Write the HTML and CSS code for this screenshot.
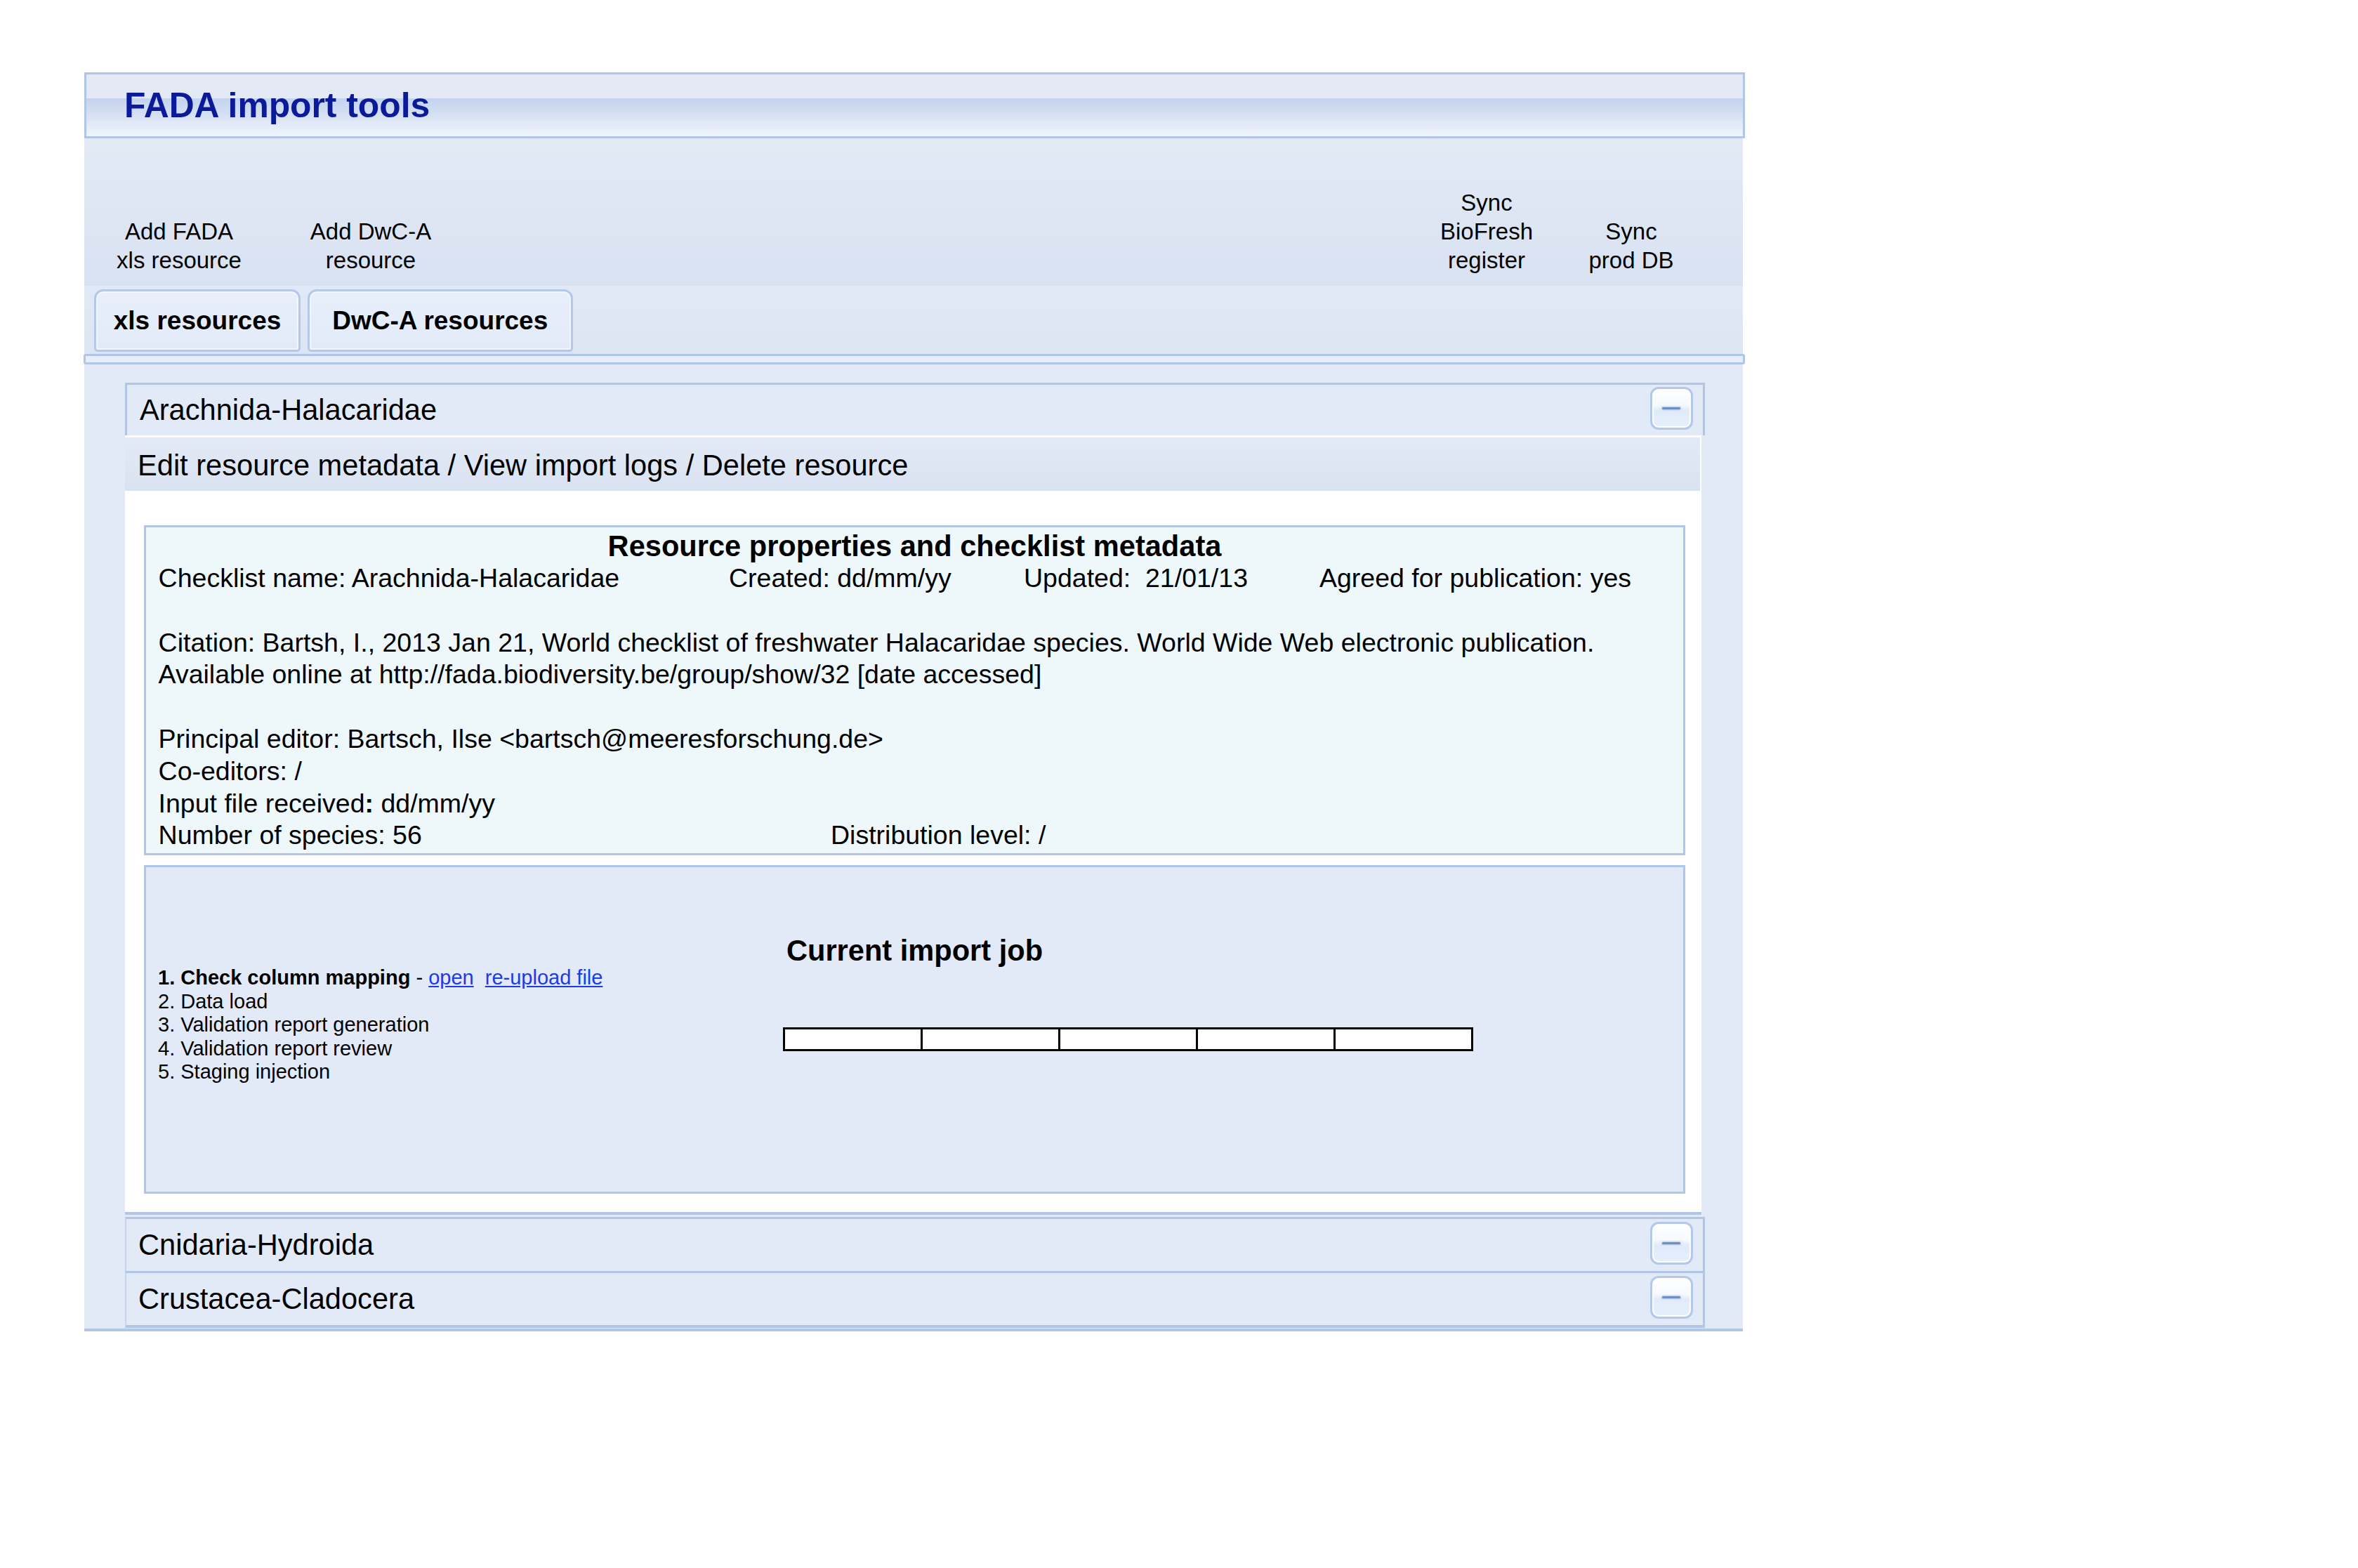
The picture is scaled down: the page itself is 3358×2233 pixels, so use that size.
FILE: index.html
```html
<!DOCTYPE html>
<html lang="en">
<head>
<meta charset="utf-8">
<title>FADA import tools</title>
<link rel="stylesheet" href="styles.css">
</head>
<body>
<div class="app">
  <header class="titlebar"><h1>FADA import tools</h1></header>

  <nav class="toolbar">
    <div class="tool tool-a">Add FADA<br>xls resource</div>
    <div class="tool tool-b">Add DwC-A<br>resource</div>
    <div class="tool tool-c">Sync<br>BioFresh<br>register</div>
    <div class="tool tool-d">Sync<br>prod DB</div>
  </nav>

  <div class="tabs">
    <div class="tab tab-xls">xls resources</div>
    <div class="tab tab-dwc">DwC-A resources</div>
  </div>
  <div class="tabline"></div>

  <main class="content">
    <section class="panel open">
      <div class="panel-head">
        <span class="panel-title">Arachnida-Halacaridae</span>
        <span class="collapse"></span>
      </div>
      <div class="panel-body">
        <div class="actions">Edit resource metadata / View import logs / Delete resource</div>

        <div class="meta">
          <div class="meta-title">Resource properties and checklist metadata</div>
          <div class="meta-row"><span class="c1">Checklist name: Arachnida-Halacaridae</span><span class="c2">Created: dd/mm/yy</span><span class="c3">Updated:  21/01/13</span><span>Agreed for publication: yes</span></div>
          <div class="meta-row"> </div>
          <div class="meta-row">Citation: Bartsh, I., 2013 Jan 21, World checklist of freshwater Halacaridae species. World Wide Web electronic publication.</div>
          <div class="meta-row">Available online at http://fada.biodiversity.be/group/show/32 [date accessed]</div>
          <div class="meta-row"> </div>
          <div class="meta-row">Principal editor: Bartsch, Ilse &lt;bartsch@meeresforschung.de&gt;</div>
          <div class="meta-row">Co-editors: /</div>
          <div class="meta-row">Input file received<b>:</b> dd/mm/yy</div>
          <div class="meta-row"><span class="n1">Number of species: 56</span><span>Distribution level: /</span></div>
        </div>

        <div class="job">
          <div class="job-title">Current import job</div>
          <div class="job-row">
            <ol class="steps">
              <li><b>1. Check column mapping</b> - <a href="#">open</a>&nbsp;&nbsp;<a href="#">re-upload file</a></li>
              <li>2. Data load</li>
              <li>3. Validation report generation</li>
              <li>4. Validation report review</li>
              <li>5. Staging injection</li>
            </ol>
            <div class="bar"><span></span><span></span><span></span><span></span><span></span></div>
          </div>
        </div>
      </div>
    </section>

    <section class="panel closed">
      <div class="panel-head">
        <span class="panel-title">Cnidaria-Hydroida</span>
        <span class="collapse"></span>
      </div>
    </section>
    <section class="panel closed last">
      <div class="panel-head">
        <span class="panel-title">Crustacea-Cladocera</span>
        <span class="collapse"></span>
      </div>
    </section>
  </main>
</div>
</body>
</html>
```

FILE: styles.css
```css
body {
  margin: 0;
  background: #ffffff;
  font-family: "Liberation Sans", Arial, Helvetica, sans-serif;
  color: #000;
}

.app {
  margin: 103px 0 0 120px;
  width: 2365px;
}

/* ---------- title bar ---------- */
.titlebar {
  height: 94px;
  box-sizing: border-box;
  border: 3px solid #b0c6e8;
  padding-left: 54px;
  background: linear-gradient(to bottom,
    #e3eaf6 0%, #e3eaf6 38.5%,
    #c4d4ee 39%, #d3def2 62%, #e6edf8 85%, #f0f4fb 100%);
}
.titlebar h1 {
  margin: 0;
  font-size: 49.8px;
  font-weight: bold;
  line-height: 88px;
  color: #0b1a98;
}

/* ---------- toolbar ---------- */
.toolbar {
  width: 2362px;
  height: 210px;
  box-sizing: border-box;
  display: flex;
  align-items: flex-end;
  padding: 0 59px 16px 25px;
  background: linear-gradient(to bottom, #e3eaf6, #d9e2f1);
}
.tool {
  font-size: 33px;
  line-height: 41px;
  text-align: center;
}
.tool-a { width: 220px; }
.tool-b { width: 220px; margin-left: 53px; }
.tool-c { width: 200px; margin-left: auto; }
.tool-d { width: 200px; margin-left: 6px; }

/* ---------- tabs ---------- */
.tabs {
  width: 2362px;
  height: 97px;
  box-sizing: border-box;
  display: flex;
  gap: 9.5px;
  padding: 5px 0 0 14px;
  background: linear-gradient(to bottom, #e2e9f6, #dce5f3);
}
.tab {
  height: 89px;
  box-sizing: border-box;
  border: 3px solid #b3c8ea;
  border-radius: 13px 13px 5px 5px;
  background: linear-gradient(to bottom, #e8effb, #e2eaf9);
  box-shadow: inset 0 0 0 2px #f3f7fd;
  font-weight: bold;
  font-size: 37px;
  line-height: 84px;
  text-align: center;
}
.tab-xls { width: 294px; }
.tab-dwc { width: 378.5px; }

.tabline {
  margin-left: -1px;
  width: 2366px;
  height: 15px;
  box-sizing: border-box;
  border: 3px solid #b0c6e8;
  border-radius: 3px;
  background: #e7eef9;
}

/* ---------- content ---------- */
.content {
  width: 2362px;
  box-sizing: border-box;
  padding: 26px 54px 1px 58px;
  background: #e3eaf7;
  border-bottom: 4px solid #b0c6e8;
}

.panel-head {
  display: flex;
  justify-content: space-between;
  align-items: flex-start;
  height: 75px;
  box-sizing: border-box;
  border: 3px solid #b0c6e8;
  border-bottom: 0;
  padding-left: 18px;
  background: #e3eaf7;
}
.panel-title {
  font-size: 41.6px;
  line-height: 72px;
  white-space: nowrap;
}

.collapse {
  position: relative;
  display: block;
  width: 61px;
  height: 61px;
  box-sizing: border-box;
  margin: 3px 14px 0 0;
  border: 3px solid #b3c8ea;
  border-radius: 12px;
  box-shadow: inset 0 0 0 2px #ffffff;
  background: linear-gradient(to bottom, #ffffff 0%, #f6f9fe 42%, #e0ebfa 55%, #e6effc 100%);
}
.collapse::before {
  content: "";
  position: absolute;
  left: 14px;
  right: 15px;
  top: 26px;
  height: 3px;
  border-radius: 2px;
  background: #6f8fc4;
  box-shadow: 0 0 2px 1px rgba(120, 150, 200, 0.5);
}

.panel-body {
  margin-right: 5px;
  padding: 3px 0 26px;
  background: #ffffff;
  border-bottom: 4px solid #b0c6e8;
}

.actions {
  height: 76px;
  box-sizing: border-box;
  margin-right: 2px;
  padding: 4px 0 0 18px;
  font-size: 41.6px;
  line-height: 72px;
  white-space: nowrap;
  background: linear-gradient(to bottom, #e3eaf6, #d9e2f1);
}

/* metadata box */
.meta {
  margin: 49px 23px 0 27px;
  height: 470px;
  box-sizing: border-box;
  border: 3px solid #b0c6e8;
  padding-top: 4px;
  background: #eef7f9;
}
.meta-title {
  font-weight: bold;
  font-size: 41.6px;
  line-height: 46px;
  text-align: center;
}
.meta-row {
  height: 45.8px;
  padding-left: 17.6px;
  font-size: 37.5px;
  line-height: 45.8px;
  white-space: pre;
}
.meta-row span { display: inline-block; }
.meta-row .c1 { width: 812.4px; }
.meta-row .c2 { width: 420px; }
.meta-row .c3 { width: 421px; }
.meta-row .n1 { width: 957.4px; }

/* import job box */
.job {
  margin: 14px 23px 0 27px;
  height: 468px;
  box-sizing: border-box;
  border: 3px solid #b0c6e8;
  padding-top: 95px;
  background: #e3eaf7;
}
.job-title {
  font-weight: bold;
  font-size: 41.6px;
  line-height: 48px;
  text-align: center;
}
.job-row {
  display: flex;
  align-items: flex-start;
  margin-top: -2px;
  padding-left: 17px;
}
.steps {
  list-style: none;
  margin: 0;
  padding: 0;
  width: 889.5px;
  flex: none;
  font-size: 29px;
  line-height: 33.5px;
  white-space: nowrap;
}
.steps a { color: #1b3be6; text-decoration: underline; }

.bar {
  display: flex;
  flex: none;
  width: 983px;
  height: 34px;
  box-sizing: border-box;
  margin-top: 87px;
  border: 3px solid #000;
  background: #ffffff;
}
.bar span { flex: 1; }
.bar span + span { border-left: 3px solid #000; }

/* collapsed panels */
.closed { margin-top: 3px; }
.closed + .closed { margin-top: 0; }
.closed .panel-head {
  height: 77px;
  border-left: 2px solid #c6d6ef;
  padding-left: 17px;
}
.closed .panel-title { line-height: 74px; }
.closed .collapse { margin-top: 4px; }
.closed.last .panel-head {
  height: 81px;
  border-bottom: 4px solid #b0c6e8;
}
```
